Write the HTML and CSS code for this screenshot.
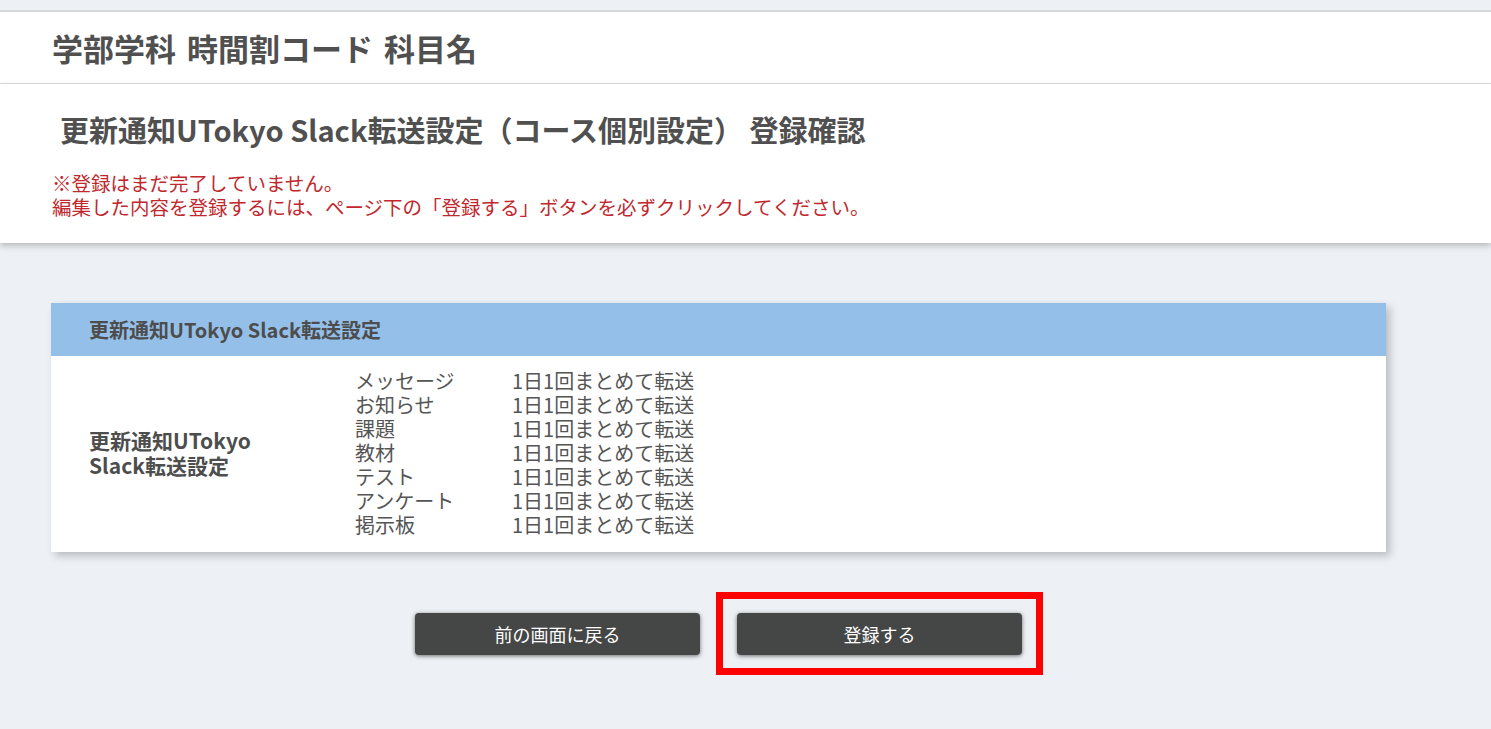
FILE: index.html
```html
<!DOCTYPE html>
<html lang="ja">
<head>
<meta charset="utf-8">
<title>登録確認</title>
<link rel="stylesheet" href="styles.css">
</head>
<body>
<div class="topstrip"></div>
<header class="course-header">
  <h1 class="course-title">学部学科 時間割コード 科目名</h1>
</header>
<section class="page-head">
  <h2 class="page-title">更新通知UTokyo Slack転送設定（コース個別設定） 登録確認</h2>
  <p class="notice">※登録はまだ完了していません。<br>編集した内容を登録するには、ページ下の「登録する」ボタンを必ずクリックしてください。</p>
</section>
<main class="main">
  <div class="card">
    <div class="card-head">更新通知UTokyo Slack転送設定</div>
    <div class="card-body">
      <div class="label">更新通知UTokyo<br>Slack転送設定</div>
      <div class="items">
        <div class="item"><span class="item-name">メッセージ</span><span class="item-val">1日1回まとめて転送</span></div>
        <div class="item"><span class="item-name">お知らせ</span><span class="item-val">1日1回まとめて転送</span></div>
        <div class="item"><span class="item-name">課題</span><span class="item-val">1日1回まとめて転送</span></div>
        <div class="item"><span class="item-name">教材</span><span class="item-val">1日1回まとめて転送</span></div>
        <div class="item"><span class="item-name">テスト</span><span class="item-val">1日1回まとめて転送</span></div>
        <div class="item"><span class="item-name">アンケート</span><span class="item-val">1日1回まとめて転送</span></div>
        <div class="item"><span class="item-name">掲示板</span><span class="item-val">1日1回まとめて転送</span></div>
      </div>
    </div>
  </div>
  <div class="actions">
    <button class="btn" type="button">前の画面に戻る</button>
    <div class="btn-wrap">
      <button class="btn" type="button">登録する</button>
      <span class="highlight"></span>
    </div>
  </div>
</main>
</body>
</html>
```

FILE: styles.css
```css
* { box-sizing: border-box; }
html, body { margin: 0; padding: 0; }
body {
  background: #edf1f5;
  font-family: "Noto Sans CJK JP", "Noto Sans", sans-serif;
  color: #505050;
  min-height: 729px;
}
.topstrip {
  height: 12px;
  background: #edf1f5;
  border-bottom: 2px solid #d5d9dc;
}
.course-header {
  background: #fff;
  height: 72px;
  border-bottom: 1px solid #dcdcdc;
  display: flex;
  align-items: center;
  padding-left: 52px;
}
.course-title {
  margin: 0;
  font-size: 31px;
  font-weight: 700;
  color: #505050;
  line-height: 1;
  word-spacing: 4px;
}
.page-head {
  background: #fff;
  padding: 27px 0 0 52px;
  height: 159px;
  box-shadow: 0 3px 6px rgba(0,0,0,0.22);
  position: relative;
}
.page-title {
  margin: 0 0 0 8px;
  font-size: 29px;
  font-weight: 700;
  line-height: 36px;
  color: #505050;
}
.notice {
  margin: 24px 0 0;
  font-size: 19.5px;
  line-height: 24px;
  color: #c0282e;
}
.main {
  padding: 60px 0 0 51px;
  width: 1386px;
}
.card {
  width: 1335px;
  background: #fff;
  box-shadow: 4px 4px 8px rgba(0,0,0,0.22);
}
.card-head {
  background: #94bfe9;
  height: 53px;
  display: flex;
  align-items: center;
  padding-left: 38px;
  font-size: 20px;
  font-weight: 700;
  color: #4d4d4d;
}
.card-body {
  display: flex;
  align-items: center;
  padding: 13px 0 15px 38px;
}
.label {
  width: 266px;
  font-size: 21px;
  font-weight: 700;
  line-height: 25px;
  color: #4d4d4d;
}
.items {
  display: flex;
  flex-direction: column;
}
.item {
  display: flex;
  font-size: 20px;
  line-height: 24px;
  color: #555;
}
.item-name { width: 157px; }
.actions {
  display: flex;
  justify-content: center;
  gap: 37px;
  margin-top: 61px;
  width: 1335px;
}
.btn {
  width: 285px;
  height: 42px;
  background: #454746;
  color: #fff;
  border: 0;
  border-radius: 4px;
  box-shadow: 0 1px 4px rgba(0,0,0,0.55);
  font-family: "Noto Sans CJK JP", sans-serif;
  font-size: 18px;
  padding: 0;
}
.btn-wrap { position: relative; }
.highlight {
  position: absolute;
  left: -21px;
  top: -21px;
  right: -21px;
  bottom: -20px;
  border: 7px solid #ff0000;
}
```
